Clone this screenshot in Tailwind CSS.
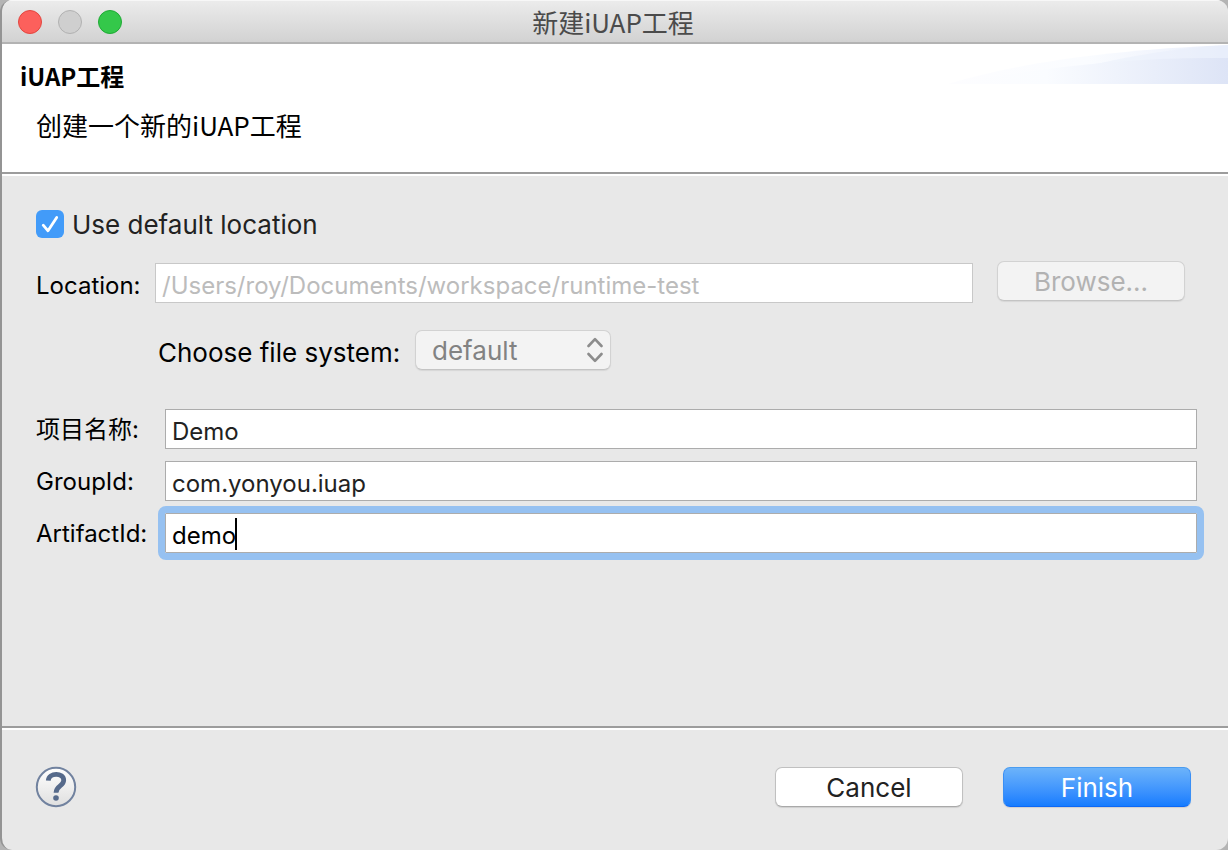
<!DOCTYPE html>
<html lang="zh-CN">
<head>
<meta charset="utf-8">
<meta name="viewport" content="width=device-width, initial-scale=1">
<title>新建iUAP工程</title>
<script src="https://cdn.jsdelivr.net/npm/@tailwindcss/browser@4"></script>
</head>
<body class="bg-[#b4b4b4] font-['Inter','Noto_Sans_CJK_SC',sans-serif] text-black">
<div class="flex min-h-screen flex-col overflow-hidden rounded-xl border-l-2 border-[#949494] bg-[#e8e8e8]">

  <header class="grid h-11 grid-cols-[1fr_auto_1fr] items-center border-b-2 border-[#b3b3b3] bg-linear-to-b from-[#ececec] to-[#d2d2d2] pt-[2px] pr-5 pl-4 shadow-[inset_0_1px_0_#f7f7f7]">
    <div class="flex gap-4">
      <button type="button" aria-label="Close" class="size-6 rounded-full border border-[#e2463f] bg-[#fc605c]"></button>
      <button type="button" aria-label="Minimize" disabled class="size-6 rounded-full border border-[#b1b1b1] bg-[#cfcfcf]"></button>
      <button type="button" aria-label="Zoom" class="size-6 rounded-full border border-[#1faa35] bg-[#34c84a]"></button>
    </div>
    <h1 class="font-['Noto_Sans_CJK_SC',sans-serif] text-[26px] leading-10 text-[#4b4b4b]">新建iUAP工程</h1>
  </header>

  <section class="relative h-[132px] border-b-2 border-white bg-white font-['Noto_Sans_CJK_SC',sans-serif] shadow-[inset_0_-2px_0_#9c9c9c]">
    <svg class="absolute top-0 right-0 h-10 w-[280px]" viewBox="0 0 280 40" preserveAspectRatio="none" aria-hidden="true">
      <defs>
        <linearGradient id="waveBack"><stop offset="0" stop-color="#fdfdff"/><stop offset=".5" stop-color="#fafcff"/><stop offset="1" stop-color="#e9eefb"/></linearGradient>
        <linearGradient id="waveFront"><stop offset="0" stop-color="#fdfdff"/><stop offset=".35" stop-color="#fafcff"/><stop offset=".6" stop-color="#eff3fc"/><stop offset="1" stop-color="#dde4f6"/></linearGradient>
      </defs>
      <path d="M0 40C70 19 160 6 280 1V40Z" fill="url(#waveBack)"/>
      <path d="M130 24C170 15 215 5 280 1V14H270C210 14 170 18 130 24Z" fill="#e6edfb" opacity=".45"/>
      <path d="M0 40C90 25 170 14 260 14H280V40Z" fill="url(#waveFront)"/>
    </svg>
    <div class="relative flex flex-col gap-2 pt-3">
      <h2 class="pl-[18px] text-2xl leading-10 font-bold">iUAP工程</h2>
      <p class="pl-[34px] pt-px text-[26px] leading-10">创建一个新的iUAP工程</p>
    </div>
  </section>

  <form class="flex flex-1 flex-col">
    <main class="flex-1 pt-8 pr-[31px] pl-[34px]">
      <label class="flex h-8 w-fit items-center gap-2 text-[26px] text-[#222]">
        <span class="grid size-7">
          <input type="checkbox" checked class="col-start-1 row-start-1 size-7 appearance-none rounded-md bg-[#429bf9]">
          <svg class="pointer-events-none col-start-1 row-start-1 size-7" viewBox="0 0 28 28" fill="none" stroke="#fff" stroke-width="2.8" stroke-linecap="round" stroke-linejoin="round" aria-hidden="true"><path d="M7.2 15.2 12 20.8 20.7 7.5"/></svg>
        </span>
        <span>Use default location</span>
      </label>

      <div class="mt-[21px] flex items-start pr-3">
        <label for="location" class="w-[119px] pt-[2px] text-2xl leading-[46px]">Location:</label>
        <input id="location" type="text" disabled value="/Users/roy/Documents/workspace/runtime-test" class="mt-[2px] h-10 min-w-0 flex-1 border border-[#c8c8c8] bg-white px-[6px] pt-[4px] text-2xl text-[#bcbcbc]">
        <button type="button" disabled class="ml-6 h-10 w-[188px] rounded-[7px] border border-[#d2d2d2] border-b-[#c4c4c4] bg-[#f3f3f3] text-[26px] text-[#b2b2b2] shadow-[0_1px_1px_#d6d6d6]">Browse...</button>
      </div>

      <div class="mt-[21px] flex items-start pl-[122px]">
        <label for="filesystem" class="w-[257px] pt-[3px] text-[26px] leading-10">Choose file system:</label>
        <div class="grid">
          <select id="filesystem" disabled class="col-start-1 row-start-1 h-10 w-[196px] appearance-none rounded-[7px] border border-[#d2d2d2] border-b-[#c4c4c4] bg-[#f3f3f3] px-4 text-[26px] text-[#828282] opacity-100 shadow-[0_1px_1px_#d6d6d6]"><option>default</option></select>
          <svg class="pointer-events-none col-start-1 row-start-1 mt-[7px] mr-2 h-[26px] w-4 justify-self-end" viewBox="0 0 16 26" fill="none" stroke="#8c8c8c" stroke-width="2.6" stroke-linecap="round" stroke-linejoin="round" aria-hidden="true"><path d="M1.5 9 8 2.2 14.5 9M1.5 17 8 23.8 14.5 17"/></svg>
        </div>
      </div>

      <div class="mt-[36px] grid grid-cols-[129px_1fr] gap-y-3 text-2xl">
        <label for="project" class="pt-[2px] leading-[38px]">项目名称:</label>
        <input id="project" type="text" value="Demo" class="h-10 w-full border border-[#acacac] bg-white px-[6px] pt-[4px] text-[#222]">
        <label for="group" class="pt-[2px] leading-[38px]">GroupId:</label>
        <input id="group" type="text" value="com.yonyou.iuap" class="h-10 w-full border border-[#acacac] bg-white px-[6px] pt-[4px] text-[#222]">
        <label for="artifact" class="pt-[2px] leading-[38px]">ArtifactId:</label>
        <div class="relative">
          <input id="artifact" type="text" value="demo" class="block h-10 w-full rounded-[1px] border border-[#acacac] bg-white px-[6px] pt-[4px] outline-[7px] outline-[#96c1f1] outline-solid">
          <span class="absolute top-[5px] left-[70px] h-8 w-[2px] bg-black" aria-hidden="true"></span>
        </div>
      </div>
    </main>

    <footer class="flex h-[124px] items-center justify-between border-t-2 border-[#9c9c9c] pr-[37px] pb-[4px] pl-[33px] shadow-[inset_0_2px_0_#fff]">
      <button type="button" aria-label="Help" class="size-[42px]">
        <svg viewBox="0 0 42 42" class="size-[42px]" fill="none" aria-hidden="true">
          <defs><linearGradient id="helpFill" x2="0" y2="1"><stop stop-color="#fff"/><stop offset="1" stop-color="#dfdfdf"/></linearGradient></defs>
          <circle cx="21" cy="21" r="19.2" fill="url(#helpFill)" stroke="#71829f" stroke-width="2"/>
          <path d="M13.3 14.6C13.8 6.3 28.7 6.2 28.7 14.2C28.7 20.3 21 19.5 21 26.8" stroke="#566a8b" stroke-width="4.8"/>
          <circle cx="21" cy="32" r="2.8" fill="#566a8b"/>
        </svg>
      </button>
      <div class="flex gap-10">
        <button type="button" class="h-10 w-[188px] rounded-[7px] border border-[#c0c0c0] border-b-[#a9a9a9] bg-white text-[26px] text-[#222] shadow-[0_1px_1px_#cfcfcf]">Cancel</button>
        <button type="submit" class="h-10 w-[188px] rounded-[7px] border border-[#4a9cf0] border-x-[#3a8ff5] border-b-[#0d68f5] bg-linear-to-b from-[#6cb3fa] to-[#147cff] text-[26px] text-white shadow-[0_1px_1px_#cfcfcf]">Finish</button>
      </div>
    </footer>
  </form>
</div>
</body>
</html>
